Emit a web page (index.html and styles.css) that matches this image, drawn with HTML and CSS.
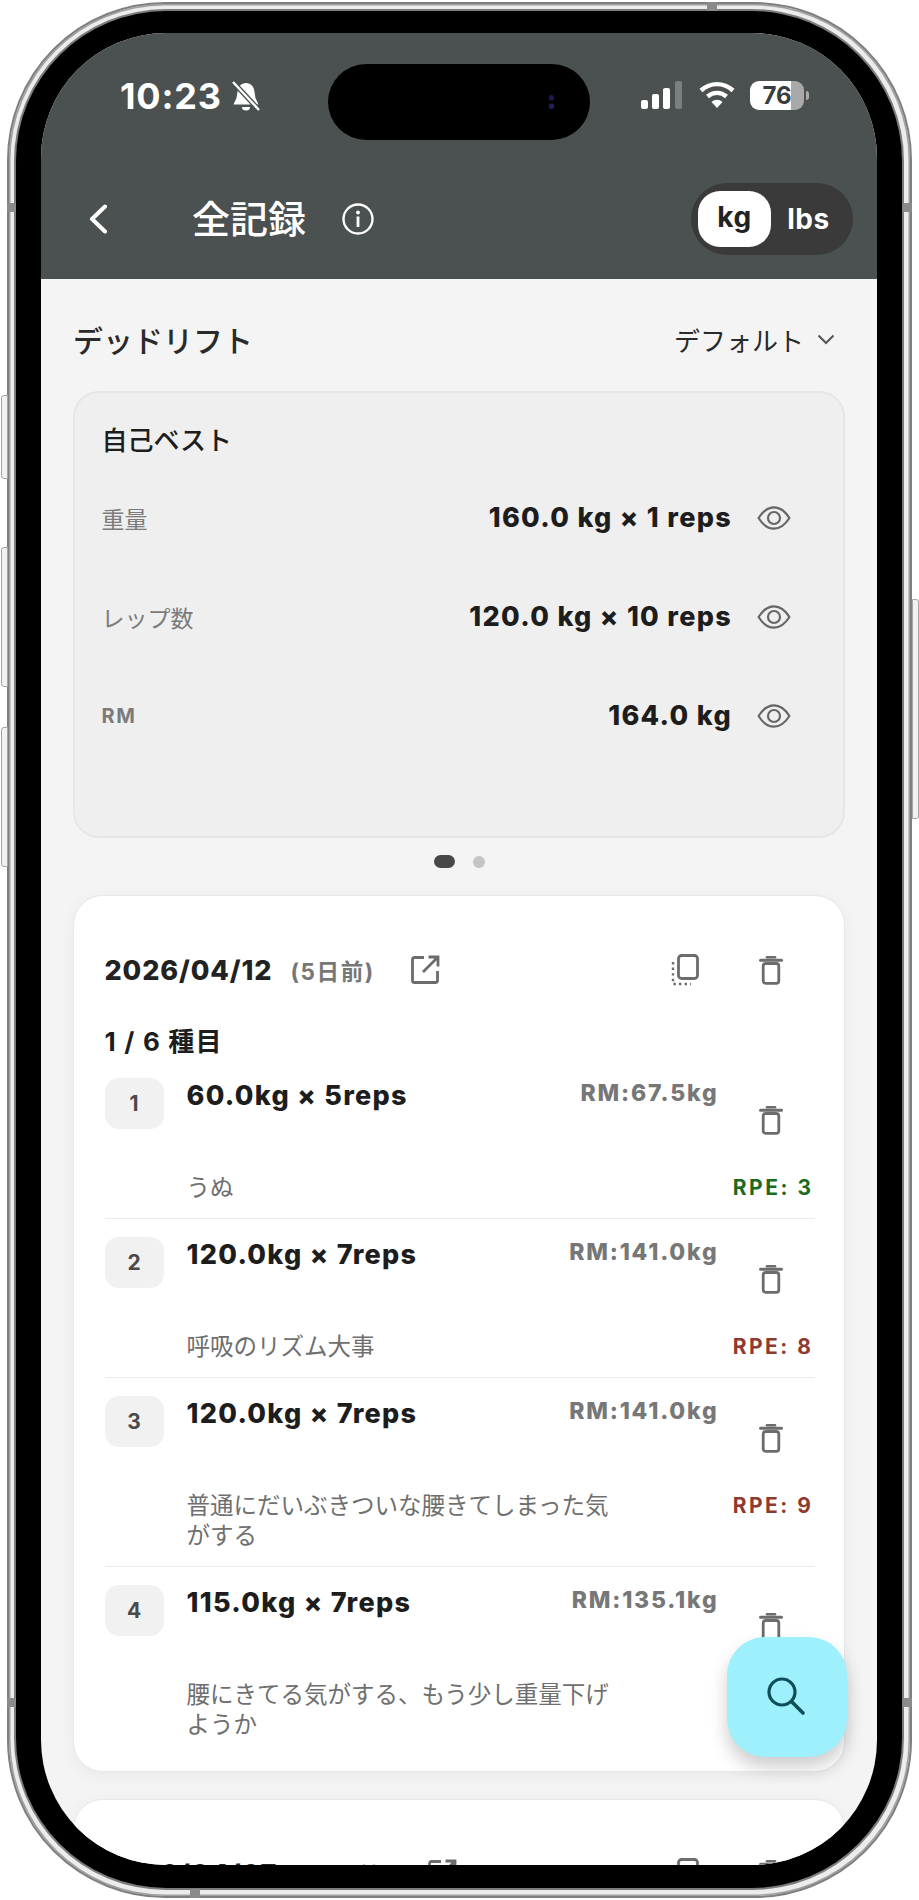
FILE: index.html
```html
<!DOCTYPE html>
<html lang="ja">
<head>
    <meta charset="UTF-8">
    <meta name="viewport" content="width=device-width, initial-scale=1.0">
    <title>全記録</title>
    <link rel="stylesheet" href="styles.css">
</head>
<body>
    <svg class="icon-defs" width="0" height="0">
        <defs>
            <symbol id="trash" viewBox="0 0 24 30">
                <path d="M8 2.2h8" fill="none" stroke="currentColor" stroke-width="2.6" stroke-linecap="round"/>
                <path d="M1.5 5.2h21" fill="none" stroke="currentColor" stroke-width="3" stroke-linecap="round"/>
                <rect x="4.2" y="8.5" width="15.6" height="19.8" rx="2.6" fill="none" stroke="currentColor" stroke-width="2.8"/>
            </symbol>
            <symbol id="eye" viewBox="0 0 34 24">
                <path d="M1.6 12C6 5 11 1.4 17 1.4S28 5 32.4 12C28 19 23 22.6 17 22.6S6 19 1.6 12Z" fill="none" stroke="currentColor" stroke-width="2.2"/>
                <circle cx="17" cy="12" r="6" fill="none" stroke="currentColor" stroke-width="2.2"/>
            </symbol>
        </defs>
    </svg>

    <div class="phone">
        <span class="side-btn side-mute"></span>
        <span class="side-btn side-up"></span>
        <span class="side-btn side-down"></span>
        <span class="side-btn side-power"></span>
        <span class="band band-lt"></span>
        <span class="band band-rt"></span>
        <span class="band band-lb"></span>
        <span class="band band-rb"></span>
        <span class="band band-top"></span>
        <span class="band band-bottom"></span>

        <div class="bezel">
            <div class="screen">
                <header class="app-header">
                    <div class="status-bar">
                        <div class="status-left">
                            <span class="clock">10:23</span>
                            <svg class="bell" viewBox="0 0 30 31">
                                <path d="M15 2c-5 0-8 3.600-8.500 9L5.500 17 2.500 23.500H27.500L24.500 17 23.500 11C23 5.600 20 2 15 2Z" fill="#fff"/>
                                <path d="M11 26a4 3.600 0 0 0 8 0Z" fill="#fff"/>
                                <path d="M2 1l26 28" stroke="#4b5050" stroke-width="5"/>
                                <path d="M2 1l26 28" stroke="#fff" stroke-width="2.400"/>
                            </svg>
                        </div>
                        <div class="island"><span class="lens"></span></div>
                        <div class="status-right">
                            <svg class="signal" viewBox="0 0 42 28">
                                <rect x="0" y="19" width="7" height="9" rx="2" fill="#fff"/>
                                <rect x="11" y="13" width="7" height="15" rx="2" fill="#fff"/>
                                <rect x="22" y="7" width="7" height="21" rx="2" fill="#fff"/>
                                <rect x="34" y="0" width="7" height="28" rx="2" fill="#7b7f7f"/>
                            </svg>
                            <svg class="wifi" viewBox="0 0 36 28">
                                <path d="M2 9.500C11.500 1 24.500 1 34 9.500" fill="none" stroke="#fff" stroke-width="4.400"/>
                                <path d="M8.500 15.500C14 10.600 22 10.600 27.500 15.500" fill="none" stroke="#fff" stroke-width="4.400"/>
                                <path d="M12.500 21C16 18 20 18 23.500 21L18 27Z" fill="#fff"/>
                            </svg>
                            <span class="battery">76</span>
                            <span class="battery-nub"></span>
                        </div>
                    </div>
                    <div class="nav-bar">
                        <svg class="back" viewBox="0 0 20 30">
                            <path d="M17 2.500L4 15l13 12.500" fill="none" stroke="#fff" stroke-width="4" stroke-linecap="round" stroke-linejoin="round"/>
                        </svg>
                        <h1 class="page-title">全記録</h1>
                        <svg class="info" viewBox="0 0 32 32">
                            <circle cx="16" cy="16" r="14.500" fill="none" stroke="#fff" stroke-width="2.400"/>
                            <circle cx="16" cy="9.500" r="1.900" fill="#fff"/>
                            <rect x="14.600" y="13.500" width="2.800" height="10.500" fill="#fff"/>
                        </svg>
                        <div class="unit-toggle">
                            <span class="unit unit-active">kg</span>
                            <span class="unit">lbs</span>
                        </div>
                    </div>
                </header>

                <main class="content">
                    <div class="section-head">
                        <h2 class="exercise">デッドリフト</h2>
                        <div class="sort">
                            <span>デフォルト</span>
                            <svg class="sort-arrow" viewBox="0 0 18 11">
                                <path d="M1.500 1.500L9 9l7.500-7.500" fill="none" stroke="#555" stroke-width="2"/>
                            </svg>
                        </div>
                    </div>

                    <section class="best-card">
                        <h3 class="best-title">自己ベスト</h3>
                        <div class="best-row">
                            <span class="best-label">重量</span>
                            <span class="best-value">160.0 kg × 1 reps</span>
                            <svg class="eye"><use href="#eye"/></svg>
                        </div>
                        <div class="best-row">
                            <span class="best-label">レップ数</span>
                            <span class="best-value">120.0 kg × 10 reps</span>
                            <svg class="eye"><use href="#eye"/></svg>
                        </div>
                        <div class="best-row">
                            <span class="best-label best-label-bold">RM</span>
                            <span class="best-value">164.0 kg</span>
                            <svg class="eye"><use href="#eye"/></svg>
                        </div>
                    </section>

                    <div class="dots">
                        <span class="dot dot-active"></span>
                        <span class="dot"></span>
                    </div>

                    <section class="session">
                        <div class="session-head">
                            <span class="date">2026/04/12</span>
                            <span class="ago">(5日前)</span>
                            <svg class="open-link" viewBox="0 0 30 30">
                                <path d="M14 2.500H4.500a2 2 0 0 0-2 2v21a2 2 0 0 0 2 2h21a2 2 0 0 0 2-2V16" fill="none" stroke="currentColor" stroke-width="2.800"/>
                                <path d="M13 17L27.500 2.500M18.500 2h9.500v9.500" fill="none" stroke="currentColor" stroke-width="2.800"/>
                            </svg>
                            <svg class="copy" viewBox="0 0 28 32">
                                <rect x="7.500" y="1.500" width="19" height="23" rx="3" fill="none" stroke="currentColor" stroke-width="2.800"/>
                                <path d="M2 8v22h18" fill="none" stroke="currentColor" stroke-width="2.400" stroke-dasharray="2.400 3.200"/>
                            </svg>
                            <svg class="trash"><use href="#trash"/></svg>
                        </div>
                        <div class="count">1 / 6 種目</div>

                        <div class="set">
                            <span class="set-no">1</span>
                            <div class="set-body">
                                <div class="set-top">
                                    <span class="set-weight">60.0kg × 5reps</span>
                                    <span class="set-rm">RM:67.5kg</span>
                                    <svg class="trash set-trash"><use href="#trash"/></svg>
                                </div>
                                <div class="set-bottom">
                                    <p class="set-note">うぬ</p>
                                    <span class="rpe rpe-low">RPE: 3</span>
                                </div>
                            </div>
                        </div>
                        <div class="set">
                            <span class="set-no">2</span>
                            <div class="set-body">
                                <div class="set-top">
                                    <span class="set-weight">120.0kg × 7reps</span>
                                    <span class="set-rm">RM:141.0kg</span>
                                    <svg class="trash set-trash"><use href="#trash"/></svg>
                                </div>
                                <div class="set-bottom">
                                    <p class="set-note">呼吸のリズム大事</p>
                                    <span class="rpe rpe-high">RPE: 8</span>
                                </div>
                            </div>
                        </div>
                        <div class="set">
                            <span class="set-no">3</span>
                            <div class="set-body">
                                <div class="set-top">
                                    <span class="set-weight">120.0kg × 7reps</span>
                                    <span class="set-rm">RM:141.0kg</span>
                                    <svg class="trash set-trash"><use href="#trash"/></svg>
                                </div>
                                <div class="set-bottom">
                                    <p class="set-note">普通にだいぶきついな腰きてしまった気がする</p>
                                    <span class="rpe rpe-high">RPE: 9</span>
                                </div>
                            </div>
                        </div>
                        <div class="set">
                            <span class="set-no">4</span>
                            <div class="set-body">
                                <div class="set-top">
                                    <span class="set-weight">115.0kg × 7reps</span>
                                    <span class="set-rm">RM:135.1kg</span>
                                    <svg class="trash set-trash"><use href="#trash"/></svg>
                                </div>
                                <div class="set-bottom">
                                    <p class="set-note">腰にきてる気がする、もう少し重量下げようか</p>
                                </div>
                            </div>
                        </div>
                    </section>

                    <section class="session">
                        <div class="session-head">
                            <span class="date">2026/04/07</span>
                            <span class="ago">(10日前)</span>
                            <svg class="open-link" viewBox="0 0 30 30">
                                <path d="M14 2.500H4.500a2 2 0 0 0-2 2v21a2 2 0 0 0 2 2h21a2 2 0 0 0 2-2V16" fill="none" stroke="currentColor" stroke-width="2.800"/>
                                <path d="M13 17L27.500 2.500M18.500 2h9.500v9.500" fill="none" stroke="currentColor" stroke-width="2.800"/>
                            </svg>
                            <svg class="copy" viewBox="0 0 28 32">
                                <rect x="7.500" y="1.500" width="19" height="23" rx="3" fill="none" stroke="currentColor" stroke-width="2.800"/>
                                <path d="M2 8v22h18" fill="none" stroke="currentColor" stroke-width="2.400" stroke-dasharray="2.400 3.200"/>
                            </svg>
                            <svg class="trash"><use href="#trash"/></svg>
                        </div>
                    </section>
                </main>

                <button class="search-fab" type="button" aria-label="検索">
                    <svg viewBox="0 0 44 44">
                        <circle cx="17" cy="17" r="13" fill="none" stroke="#0e4f57" stroke-width="3.200"/>
                        <path d="M26.500 26.500L38 38" fill="none" stroke="#0e4f57" stroke-width="3.600" stroke-linecap="round"/>
                    </svg>
                </button>
            </div>
        </div>
    </div>
</body>
</html>
```

FILE: styles.css
```css
* {
    box-sizing: border-box;
}

body {
    margin: 0;
    background-color: #fff;
    font-family: 'Inter', 'Noto Sans CJK JP', sans-serif;
    color: #1d1d1d;
}

h1, h2, h3, p {
    margin: 0;
    font-weight: 400;
}

.icon-defs {
    position: absolute;
}

/* Phone frame */
.phone {
    position: relative;
    width: 905px;
    height: 1896px;
    margin: 2px 0 0 7px;
    padding: 7px 8px 7px 7px;
    border: 2px solid #7f7f7f;
    border-radius: 158px;
    background-color: #ececec;
    box-shadow: inset 0 0 0 1.5px #a0a0a0;
}

.bezel {
    height: 1877px;
    padding: 22px 25px 23px;
    background-color: #000;
    border-radius: 150px;
    box-shadow: 0 0 0 2px #7c7c7c;
}

.screen {
    position: relative;
    height: 1832px;
    overflow: hidden;
    border-radius: 125px;
    background-color: #f4f4f4;
}

.side-btn {
    position: absolute;
    width: 7px;
    background-color: #f2f2f2;
    border: 1.5px solid #a5a5a5;
    border-radius: 3px 0 0 3px;
}

.side-mute { left: -8px; top: 391px; height: 84px; }
.side-up { left: -8px; top: 543px; height: 140px; }
.side-down { left: -8px; top: 723px; height: 140px; }

.side-power {
    right: -9px;
    top: 595px;
    height: 220px;
    border-radius: 0 3px 3px 0;
}

.band {
    position: absolute;
    background-color: #8b8b8b;
}

.band-lt, .band-lb, .band-rt, .band-rb {
    width: 9px;
    height: 9px;
}

.band-lt { left: -2px; top: 199px; }
.band-lb { left: -2px; top: 1694px; }
.band-rt { right: -2px; top: 199px; }
.band-rb { right: -2px; top: 1694px; }

.band-top, .band-bottom {
    width: 10px;
    height: 9px;
}

.band-top { left: 698px; top: -2px; }
.band-bottom { left: 181px; bottom: -2px; }

/* Header */
.app-header {
    height: 246px;
    background-color: #4b5050;
    color: #fff;
}

.status-bar {
    display: grid;
    grid-template-columns: 1fr 262px 1fr;
    height: 107px;
    padding-top: 31px;
}

.status-left {
    display: flex;
    align-items: center;
    gap: 9px;
    padding-left: 79px;
    height: 76px;
    margin-top: -6px;
}

.clock {
    font-size: 36px;
    font-weight: 700;
    letter-spacing: 0.8px;
}

.bell {
    width: 30px;
    height: 31px;
}

.island {
    display: flex;
    align-items: center;
    justify-content: flex-end;
    height: 76px;
    padding-right: 36px;
    background-color: #000;
    border-radius: 38px;
}

.lens {
    width: 5px;
    height: 14px;
    border-radius: 3px;
    background: linear-gradient(#1c1c50 30%, #000 45%, #000 55%, #22225c 70%);
}

.status-right {
    display: flex;
    align-items: flex-start;
    padding: 17px 0 0 51px;
    height: 76px;
}

.signal {
    width: 42px;
    height: 28px;
}

.wifi {
    width: 36px;
    height: 28px;
    margin-left: 16px;
}

.battery {
    width: 54px;
    height: 29px;
    margin-left: 15px;
    border-radius: 9px;
    background: linear-gradient(90deg, #fff 76%, #a9a9a9 76%);
    color: #3a3d3d;
    font-size: 24px;
    font-weight: 700;
    line-height: 29px;
    text-align: center;
}

.battery-nub {
    width: 3px;
    height: 9px;
    margin: 10px 0 0 2px;
    border-radius: 0 3px 3px 0;
    background-color: #a9a9a9;
}

.nav-bar {
    display: flex;
    align-items: center;
    height: 72px;
    margin-top: 43px;
    padding: 0 24px 0 47px;
}

.back {
    width: 20px;
    height: 30px;
}

.page-title {
    margin-left: 84px;
    font-size: 38px;
    font-weight: 500;
    line-height: 1;
}

.info {
    width: 32px;
    height: 32px;
    margin-left: 36px;
}

.unit-toggle {
    display: flex;
    align-items: center;
    width: 162px;
    height: 72px;
    margin-left: auto;
    padding: 0 7px;
    background-color: #3a3a3a;
    border-radius: 36px;
    font-size: 28px;
    font-weight: 700;
    letter-spacing: 0.5px;
}

.unit {
    flex: 1;
    text-align: center;
}

.unit-active {
    flex: 0 0 73px;
    height: 56px;
    background-color: #fff;
    border-radius: 22px;
    color: #222;
    line-height: 52px;
}

/* Page content */
.content {
    padding: 0 32px;
}

.section-head {
    display: flex;
    align-items: center;
    justify-content: space-between;
    height: 42px;
    margin: 39px 0 31px;
    padding-right: 10px;
}

.exercise {
    font-size: 30px;
    font-weight: 500;
    color: #2a2a2a;
}

.sort {
    display: flex;
    align-items: center;
    gap: 13px;
    font-size: 26px;
    color: #2a2a2a;
}

.sort-arrow {
    width: 18px;
    height: 11px;
}

.best-card {
    height: 447px;
    padding: 29px 52px 0 26.5px;
    background-color: #efefef;
    border: 2px solid #e6e6e6;
    border-radius: 26px;
}

.best-title {
    height: 38px;
    margin-bottom: 8px;
    font-size: 26px;
    font-weight: 500;
    line-height: 38px;
}

.best-row {
    display: flex;
    align-items: center;
    height: 99px;
}

.best-label {
    flex: 1;
    font-size: 23px;
    color: #7b7b7b;
}

.best-label-bold {
    font-weight: 700;
    font-size: 20px;
    letter-spacing: 1.5px;
}

.best-value {
    font-size: 27px;
    font-weight: 800;
    letter-spacing: 1.3px;
}

.eye {
    width: 34px;
    height: 24px;
    margin-left: 25px;
    color: #666;
}

.dots {
    display: flex;
    justify-content: center;
    align-items: center;
    gap: 18px;
    height: 13px;
    margin: 17px 0 27px;
}

.dot {
    width: 12px;
    height: 12px;
    border-radius: 50%;
    background-color: #c4c4c4;
}

.dot-active {
    width: 21px;
    height: 13px;
    border-radius: 7px;
    background-color: #484848;
}

.session {
    margin-bottom: 27px;
    padding: 50px 29px 16px 30.5px;
    background-color: #fff;
    border: 1.5px solid #e8e8e8;
    border-radius: 30px;
    box-shadow: 0 4px 16px rgba(0, 0, 0, 0.05);
}

.session-head {
    display: flex;
    align-items: center;
    height: 48px;
    padding-right: 32.5px;
    color: #6c6c6c;
}

.date {
    font-size: 27px;
    font-weight: 800;
    color: #222;
    letter-spacing: 0.9px;
}

.ago {
    margin-left: 18px;
    font-size: 22.5px;
    font-weight: 700;
    color: #777;
    letter-spacing: 1.6px;
}

.open-link {
    width: 30px;
    height: 30px;
    margin-left: 35px;
}

.copy {
    width: 28px;
    height: 32px;
    margin-left: auto;
}

.trash {
    width: 24px;
    height: 30px;
    color: #6c6c6c;
}

.session-head .trash {
    margin-left: 60px;
}

.count {
    height: 40px;
    margin: 28px 0 0;
    font-size: 26px;
    font-weight: 700;
    line-height: 40px;
    letter-spacing: 1.2px;
}

.set {
    display: grid;
    grid-template-columns: 59px 1fr;
    column-gap: 23px;
    padding: 18px 0 15px;
    border-bottom: 1.5px solid #ebebeb;
}

.count + .set {
    padding-top: 16px;
}

.set:last-child {
    border-bottom: none;
}

.set-no {
    height: 51px;
    background-color: #f1f1f1;
    border-radius: 14px;
    color: #4a4a4a;
    font-size: 21px;
    font-weight: 700;
    line-height: 51px;
    text-align: center;
}

.set-top {
    display: flex;
    align-items: flex-start;
    height: 95px;
    padding-right: 32.5px;
}

.set-weight {
    flex: 1;
    font-size: 27px;
    font-weight: 800;
    line-height: 36px;
    letter-spacing: 1.3px;
}

.set-rm {
    font-size: 23px;
    font-weight: 800;
    line-height: 30px;
    color: #777;
    letter-spacing: 1.8px;
}

.set-trash {
    margin: 27px 0 0 40px;
}

.set-bottom {
    display: flex;
    justify-content: space-between;
    align-items: flex-start;
}

.set-note {
    width: 436px;
    font-size: 23.5px;
    line-height: 30px;
    color: #6f6f6f;
}

.rpe {
    margin-right: 1.5px;
    font-size: 21px;
    font-weight: 700;
    line-height: 30px;
    letter-spacing: 2.5px;
}

.rpe-low {
    color: #1c6a1e;
}

.rpe-high {
    color: #8e3a2e;
}

.search-fab {
    position: absolute;
    right: 30px;
    top: 1604px;
    display: flex;
    align-items: flex-start;
    width: 120px;
    height: 120px;
    padding: 38px 0 0 38px;
    border: none;
    border-radius: 38px;
    background-color: #9ef0fd;
    box-shadow: 0 10px 18px rgba(0, 0, 0, 0.2);
}

.search-fab svg {
    display: block;
    width: 44px;
    height: 44px;
}
```
